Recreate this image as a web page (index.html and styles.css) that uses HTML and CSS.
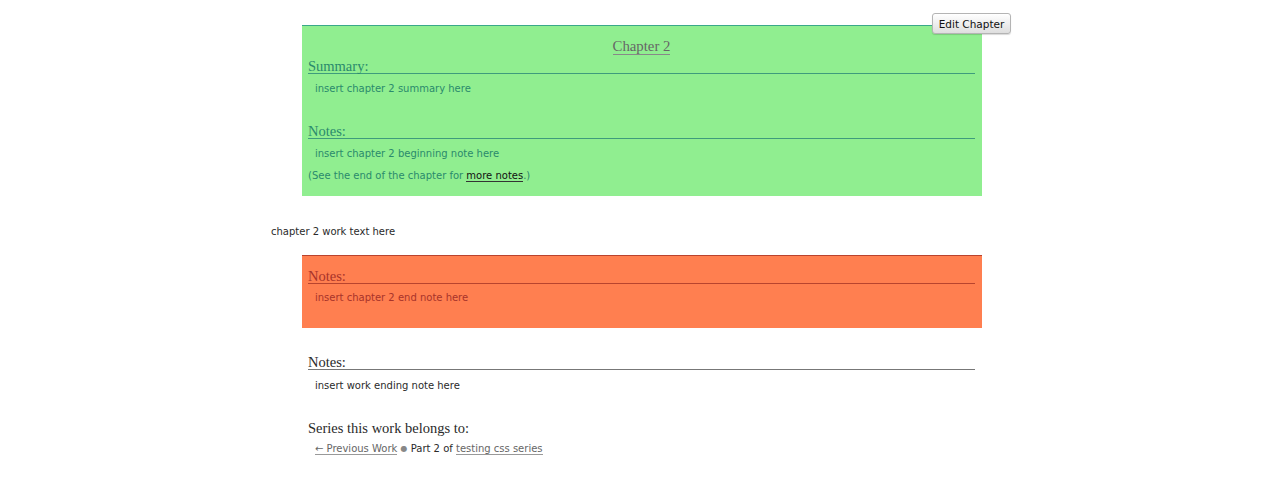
FILE: index.html
```html
<!DOCTYPE html>
<html lang="en">
<head>
    <meta charset="UTF-8">
    <title>Chapter 2</title>
    <link rel="stylesheet" href="styles.css">
</head>
<body>
    <div class="chapter">
        <button class="edit-btn">Edit Chapter</button>

        <div class="preface preface-begin">
            <h2 class="title"><a href="#">Chapter 2</a></h2>
            <h3 class="heading">Summary:</h3>
            <blockquote class="userstuff"><p>insert chapter 2 summary here</p></blockquote>
            <h3 class="heading notes-heading">Notes:</h3>
            <blockquote class="userstuff"><p>insert chapter 2 beginning note here</p></blockquote>
            <p class="jump">(See the end of the chapter for <a href="#">more notes</a>.)</p>
        </div>

        <div class="work-text">
            <p>chapter 2 work text here</p>
        </div>

        <div class="preface preface-end">
            <h3 class="heading">Notes:</h3>
            <blockquote class="userstuff"><p>insert chapter 2 end note here</p></blockquote>
        </div>

        <div class="afterword">
            <h3 class="heading">Notes:</h3>
            <blockquote class="userstuff"><p>insert work ending note here</p></blockquote>
            <h3 class="series-heading">Series this work belongs to:</h3>
            <div class="series">
                <a href="#">← Previous Work</a>
                <span class="divider">●</span>
                Part 2 of <a href="#">testing css series</a>
            </div>
        </div>
    </div>
</body>
</html>
```

FILE: styles.css
```css
body {
    margin: 0;
    background: #fff;
    color: #2a2a2a;
    font-family: "DejaVu Sans", Verdana, sans-serif;
    font-size: 10px;
}

p, h2, h3, blockquote {
    margin: 0;
}

a {
    color: #555;
    text-decoration: none;
    border-bottom: 1px solid #999;
}

.chapter {
    position: relative;
    width: 740px;
    margin: 0 auto 0 271px;
    padding-top: 25px;
}

.edit-btn {
    position: absolute;
    top: 13px;
    right: 0;
    height: 21px;
    width: 79px;
    padding: 0;
    font-family: "DejaVu Sans", sans-serif;
    font-size: 10.5px;
    color: #111;
    background: linear-gradient(#ffffff, #dedede);
    border: 1px solid #b4b4b4;
    border-radius: 3px;
    box-shadow: 0 1px 1px rgba(0,0,0,0.15);
}

.preface {
    width: 680px;
    margin-left: 31px;
    box-sizing: border-box;
    padding: 0 7px 0 6px;
}

.heading, .title, .series-heading {
    font-family: "Liberation Serif", "Times New Roman", serif;
    font-weight: normal;
}

.heading {
    font-size: 14.5px;
    line-height: 14px;
    padding-top: 2px;
    border-bottom: 1px solid currentColor;
}

.userstuff p {
    line-height: 18px;
    padding-left: 7px;
}

/* beginning of chapter */
.preface-begin {
    background: #90ee90;
    color: #2a8a6c;
    border-top: 1px solid #3aa88a;
    padding-bottom: 11px;
}

.preface-begin .heading {
    border-bottom-color: #3e9c7c;
}

.title {
    text-align: center;
    font-size: 14.8px;
    line-height: 20px;
    margin-top: 10px;
}

.title a {
    color: #666;
    border-bottom-color: #888;
}

.title + .heading {
    margin-top: 1px;
}

.preface-begin .userstuff {
    margin-top: 6px;
}

.preface-begin .notes-heading {
    margin-top: 24px;
}

.jump {
    margin-top: 4px;
    line-height: 18px;
}

.jump a {
    color: #111;
    border-bottom-color: #333;
}

.work-text {
    margin-top: 27px;
    line-height: 18px;
}

/* end of chapter */
.preface-end {
    margin-top: 14px;
    background: #ff7f50;
    color: #a8332a;
    border-top: 1px solid #b9432e;
    padding-top: 11px;
    padding-bottom: 21px;
}

.preface-end .heading {
    border-bottom-color: #b8442e;
}

.preface-end .userstuff {
    margin-top: 5px;
}

/* end of work */
.afterword {
    margin: 25px 0 0 37px;
    width: 667px;
}

.afterword .heading {
    border-bottom-color: #777;
}

.afterword .userstuff {
    margin-top: 7px;
}

.series-heading {
    margin-top: 24px;
    font-size: 14.5px;
    line-height: 18px;
}

.series {
    margin-top: 3px;
    padding-left: 7px;
    line-height: 18px;
}

.series a {
    color: #666;
}

.divider {
    color: #888;
    font-size: 8px;
    vertical-align: 1px;
}
```
